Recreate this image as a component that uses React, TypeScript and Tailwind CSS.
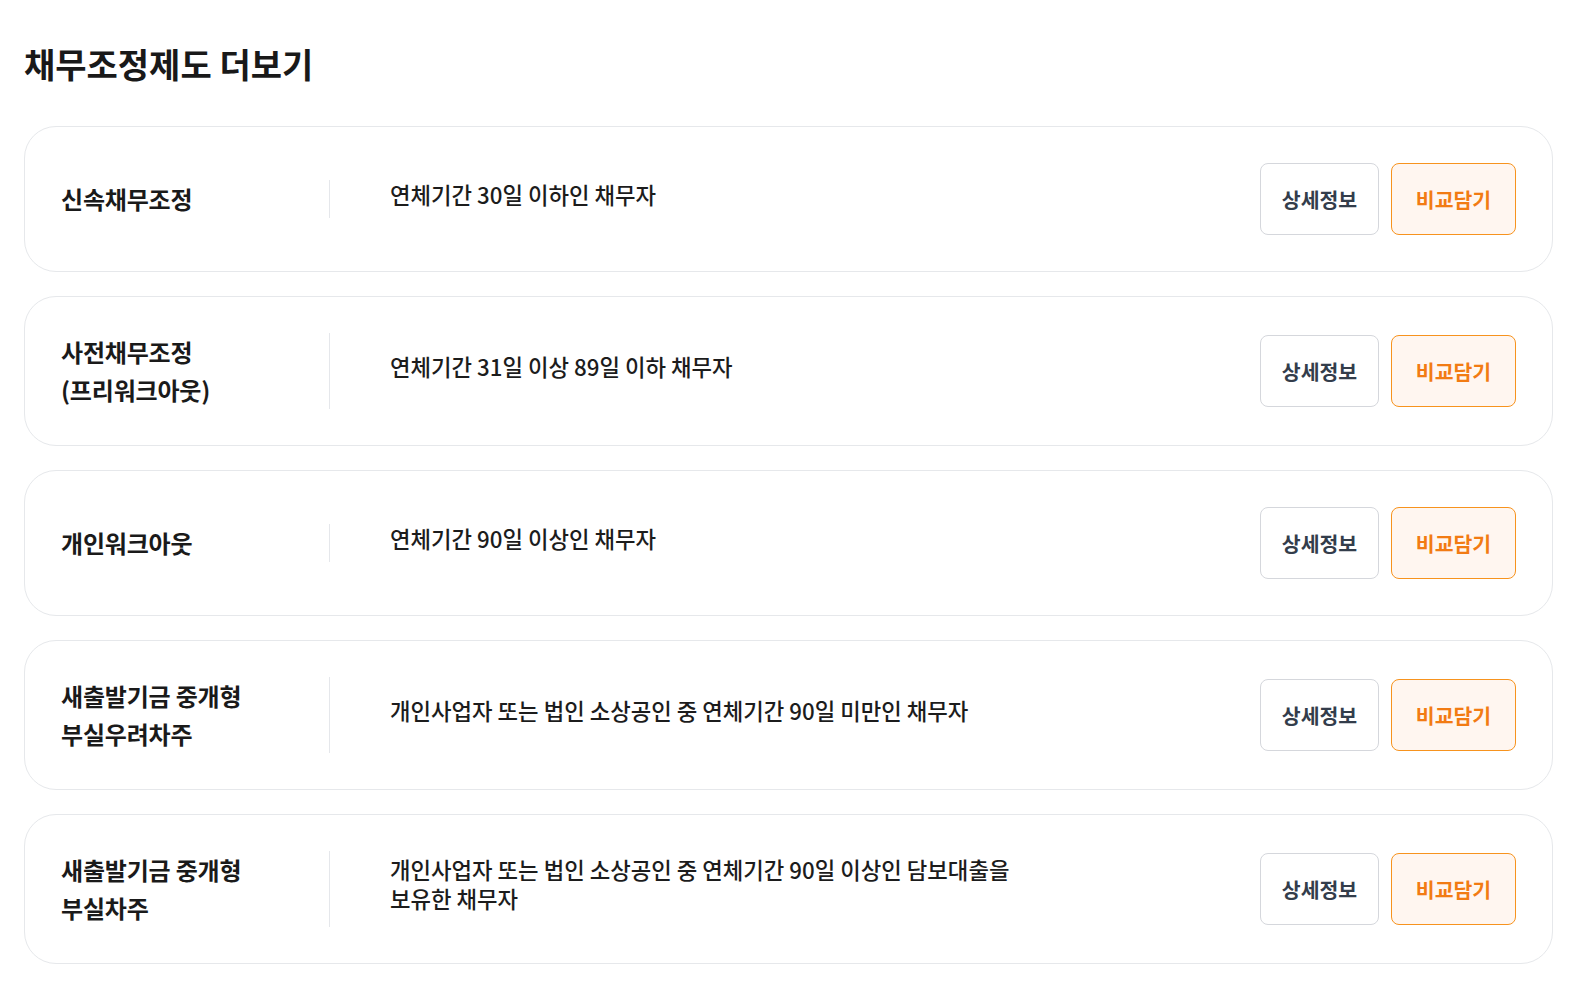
const PROGRAMS = [
  { name: ['신속채무조정'], desc: ['연체기간 30일 이하인 채무자'] },
  { name: ['사전채무조정', '(프리워크아웃)'], desc: ['연체기간 31일 이상 89일 이하 채무자'] },
  { name: ['개인워크아웃'], desc: ['연체기간 90일 이상인 채무자'] },
  {
    name: ['새출발기금 중개형', '부실우려차주'],
    desc: ['개인사업자 또는 법인 소상공인 중 연체기간 90일 미만인 채무자'],
  },
  {
    name: ['새출발기금 중개형', '부실차주'],
    desc: ['개인사업자 또는 법인 소상공인 중 연체기간 90일 이상인 담보대출을', '보유한 채무자'],
  },
];

export default function App() {
  return (
    <div
      className="min-h-screen bg-white px-6 pt-[39px] text-[#191919]"
      style={{ fontFamily: '"Noto Sans CJK KR", "Noto Sans", sans-serif' }}
    >
      <h2 className="text-[34px] leading-[50px] font-bold">채무조정제도 더보기</h2>

      <ul className="mt-[37px] flex w-[1529px] flex-col gap-6">
        {PROGRAMS.map((p) => (
          <li
            key={p.name.join(' ')}
            className="flex items-center rounded-[32px] border border-[#e6e8eb] p-[36px]"
          >
            <div className="w-[269px] shrink-0 border-r border-[#e5e7eb] text-[24px] leading-[38px] font-bold tracking-[-0.2px] text-[#1a1a1a]">
              {p.name.map((line) => (
                <div key={line}>{line}</div>
              ))}
            </div>
            <div className="mb-[10px] flex-1 pl-[60px] text-[22.3px] leading-[29px] font-medium text-[#1c1c1c]">
              {p.desc.map((line) => (
                <div key={line}>{line}</div>
              ))}
            </div>
            <div className="flex shrink-0 gap-3">
              <button className="h-[72px] w-[119px] rounded-lg border border-[#d5d7dc] bg-white text-[20.5px] font-bold text-[#333d4b]">
                상세정보
              </button>
              <button className="h-[72px] w-[125px] rounded-lg border border-[#f7931e] bg-[#fff6f0] text-[20.5px] font-bold text-[#f27b13]">
                비교담기
              </button>
            </div>
          </li>
        ))}
      </ul>
    </div>
  );
}
